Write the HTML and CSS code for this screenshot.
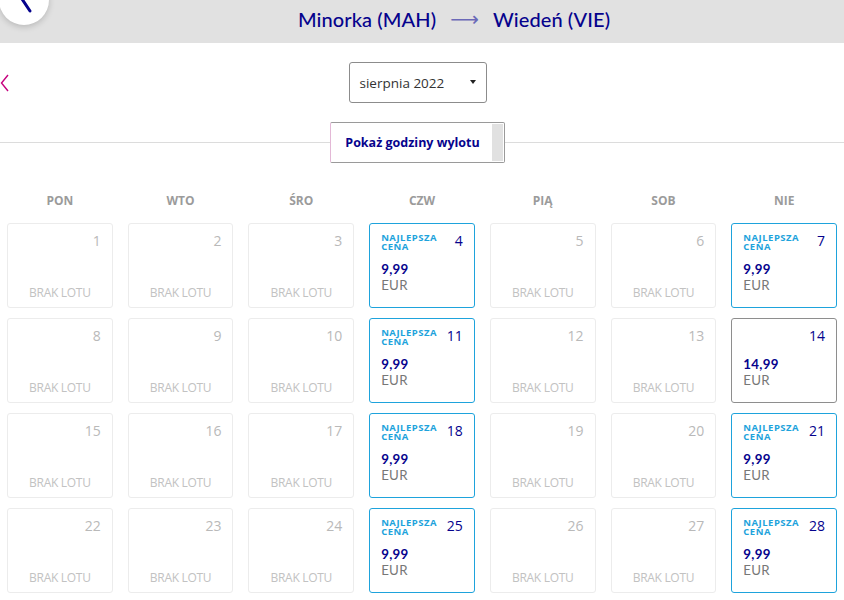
FILE: index.html
```html
<!DOCTYPE html>
<html lang="pl">
<head>
<meta charset="utf-8">
<title>Kalendarz lotów</title>
<link rel="stylesheet" href="styles.css">
</head>
<body>
<header class="route-bar">
  <button class="back-circle" aria-label="Wstecz">
    <svg width="50" height="50" viewBox="0 0 50 50"><path d="M31 -6 L23 6 L31 18" fill="none" stroke="#06038d" stroke-width="3" stroke-linecap="round" stroke-linejoin="round"/></svg>
  </button>
  <h1 class="route-title"><span>Minorka (MAH)</span><span class="route-arrow">⟶</span><span>Wiedeń (VIE)</span></h1>
</header>
<main class="content">
  <div class="month-nav">
    <span class="prev-month">
      <svg width="10" height="18" viewBox="0 0 10 18"><path d="M8 1 L1.5 9 L8 17" fill="none" stroke="#c6007e" stroke-width="1.4"/></svg>
    </span>
    <div class="month-select">
      <span>sierpnia 2022</span>
      <span class="caret"></span>
    </div>
  </div>
  <div class="toggle-row">
    <button class="toggle-btn"><span class="toggle-label">Pokaż godziny wylotu</span><span class="toggle-scroll"></span></button>
  </div>
  <div class="weekdays">
    <span>PON</span><span>WTO</span><span>ŚRO</span><span>CZW</span><span>PIĄ</span><span>SOB</span><span>NIE</span>
  </div>
  <div class="calendar">
    <div class="day empty"><span class="num">1</span><span class="none">BRAK LOTU</span></div>
    <div class="day empty"><span class="num">2</span><span class="none">BRAK LOTU</span></div>
    <div class="day empty"><span class="num">3</span><span class="none">BRAK LOTU</span></div>
    <div class="day best"><div class="top"><span class="tag">NAJLEPSZA CENA</span><span class="num">4</span></div><span class="price">9,99</span><span class="cur">EUR</span></div>
    <div class="day empty"><span class="num">5</span><span class="none">BRAK LOTU</span></div>
    <div class="day empty"><span class="num">6</span><span class="none">BRAK LOTU</span></div>
    <div class="day best"><div class="top"><span class="tag">NAJLEPSZA CENA</span><span class="num">7</span></div><span class="price">9,99</span><span class="cur">EUR</span></div>

    <div class="day empty"><span class="num">8</span><span class="none">BRAK LOTU</span></div>
    <div class="day empty"><span class="num">9</span><span class="none">BRAK LOTU</span></div>
    <div class="day empty"><span class="num">10</span><span class="none">BRAK LOTU</span></div>
    <div class="day best"><div class="top"><span class="tag">NAJLEPSZA CENA</span><span class="num">11</span></div><span class="price">9,99</span><span class="cur">EUR</span></div>
    <div class="day empty"><span class="num">12</span><span class="none">BRAK LOTU</span></div>
    <div class="day empty"><span class="num">13</span><span class="none">BRAK LOTU</span></div>
    <div class="day avail"><div class="top"><span class="tag"></span><span class="num">14</span></div><span class="price">14,99</span><span class="cur">EUR</span></div>

    <div class="day empty"><span class="num">15</span><span class="none">BRAK LOTU</span></div>
    <div class="day empty"><span class="num">16</span><span class="none">BRAK LOTU</span></div>
    <div class="day empty"><span class="num">17</span><span class="none">BRAK LOTU</span></div>
    <div class="day best"><div class="top"><span class="tag">NAJLEPSZA CENA</span><span class="num">18</span></div><span class="price">9,99</span><span class="cur">EUR</span></div>
    <div class="day empty"><span class="num">19</span><span class="none">BRAK LOTU</span></div>
    <div class="day empty"><span class="num">20</span><span class="none">BRAK LOTU</span></div>
    <div class="day best"><div class="top"><span class="tag">NAJLEPSZA CENA</span><span class="num">21</span></div><span class="price">9,99</span><span class="cur">EUR</span></div>

    <div class="day empty"><span class="num">22</span><span class="none">BRAK LOTU</span></div>
    <div class="day empty"><span class="num">23</span><span class="none">BRAK LOTU</span></div>
    <div class="day empty"><span class="num">24</span><span class="none">BRAK LOTU</span></div>
    <div class="day best"><div class="top"><span class="tag">NAJLEPSZA CENA</span><span class="num">25</span></div><span class="price">9,99</span><span class="cur">EUR</span></div>
    <div class="day empty"><span class="num">26</span><span class="none">BRAK LOTU</span></div>
    <div class="day empty"><span class="num">27</span><span class="none">BRAK LOTU</span></div>
    <div class="day best"><div class="top"><span class="tag">NAJLEPSZA CENA</span><span class="num">28</span></div><span class="price">9,99</span><span class="cur">EUR</span></div>
  </div>
</main>
</body>
</html>
```

FILE: styles.css
```css
* { box-sizing: border-box; }
html, body { margin: 0; padding: 0; background: #fff; }
body {
  font-family: "Open Sans", "Noto Sans", sans-serif;
  color: #06038d;
  overflow: hidden;
  height: 600px;
}
.route-bar {
  position: relative;
  height: 43px;
  background: #e1e1e1;
  display: flex;
  align-items: center;
  justify-content: center;
}
.back-circle {
  position: absolute;
  left: -1px;
  top: -25px;
  width: 50px;
  height: 50px;
  border-radius: 50%;
  border: none;
  padding: 0;
  background: #fff;
  box-shadow: 0 2px 6px rgba(0,0,0,0.18);
  overflow: hidden;
}
.back-circle svg { display: block; position: absolute; left: 0; top: 18px; }
.route-title {
  margin: 0 0 5px 64px;
  font-family: "Lato", sans-serif;
  font-weight: 500;
  font-size: 20px;
  letter-spacing: 0.1px;
  color: #06038d;
  display: flex;
  align-items: center;
  gap: 14px;
}
.route-arrow {
  color: #6b69b8;
  font-size: 20px;
  font-family: "DejaVu Sans", sans-serif;
  font-weight: 400;
}
.content { padding: 0 7px; }
.month-nav {
  position: relative;
  display: flex;
  justify-content: center;
  padding-top: 19px;
}
.prev-month {
  position: absolute;
  left: -7px;
  top: 31px;
  display: block;
}
.prev-month svg { display: block; }
.month-select {
  width: 138px;
  height: 41px;
  border: 1px solid #8c8c8c;
  border-radius: 3px;
  display: flex;
  align-items: center;
  justify-content: space-between;
  padding: 0 10px 0 10px;
  margin-right: 9px;
  font-size: 13.5px;
  color: #333;
}
.caret {
  width: 0; height: 0;
  border-left: 3px solid transparent;
  border-right: 3px solid transparent;
  border-top: 4px solid #222;
  margin-bottom: 2px;
}
.toggle-row {
  margin: 19px -7px 0;
  display: flex;
  justify-content: center;
  background: linear-gradient(#dcdcdc, #dcdcdc) center / 100% 1px no-repeat;
}
.toggle-btn {
  width: 175px;
  height: 41px;
  margin-right: 9px;
  background: #fff;
  border: 1px solid #9a9a9a;
  border-left-color: #e3b8d6;
  border-radius: 2px;
  display: flex;
  align-items: stretch;
  padding: 0;
  font-family: inherit;
}
.toggle-label {
  flex: 1;
  display: flex;
  align-items: center;
  justify-content: center;
  font-size: 12.5px;
  font-weight: 700;
  color: #06038d;
  padding-left: 2px;
}
.toggle-scroll {
  width: 11px;
  margin: 1px 1px 1px 0;
  background: #e1e1e1;
}
.weekdays {
  display: grid;
  grid-template-columns: repeat(7, 1fr);
  column-gap: 15px;
  margin-top: 29px;
  height: 18px;
  line-height: 18px;
  text-align: center;
  font-size: 12px;
  font-weight: 700;
  color: #9b9b9b;
}
.calendar {
  display: grid;
  grid-template-columns: repeat(7, 1fr);
  grid-auto-rows: 85px;
  column-gap: 15px;
  row-gap: 10px;
  margin-top: 13px;
}
.day {
  border: 1px solid #ececec;
  border-radius: 3px;
  display: flex;
  flex-direction: column;
  padding: 7px 11px 0 11px;
}
.day .num {
  font-size: 14px;
  line-height: 20px;
  text-align: right;
  color: #b9b9b9;
}
.day.empty .none {
  margin-top: auto;
  margin-bottom: 6px;
  text-align: center;
  font-size: 12px;
  line-height: 16px;
  color: #c2c2c2;
  letter-spacing: -0.3px;
}
.day.best { border-color: #1ea3dc; }
.day.avail { border-color: #8e8e8e; }
.top {
  display: flex;
  justify-content: space-between;
  align-items: flex-start;
  height: 30px;
}
.tag {
  font-size: 9.5px;
  font-weight: 700;
  line-height: 8.5px;
  color: #1ea3dc;
  width: 62px;
  padding-top: 3px;
  letter-spacing: 0.5px;
}
.day.best .num, .day.avail .num { color: #06038d; }
.price {
  font-family: "Lato", sans-serif;
  font-size: 13.3px;
  font-weight: 700;
  line-height: 16px;
  color: #06038d;
  letter-spacing: 0.3px;
}
.cur {
  font-family: "Lato", sans-serif;
  font-size: 13.3px;
  line-height: 16px;
  color: #777;
  letter-spacing: 0.3px;
}
```
